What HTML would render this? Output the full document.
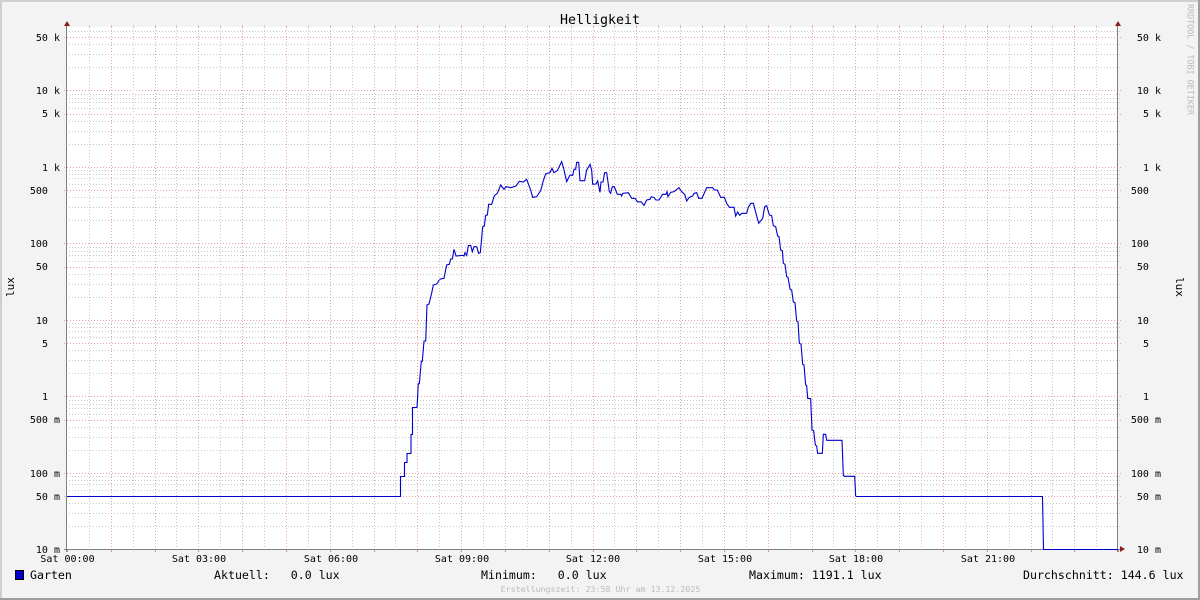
<!DOCTYPE html>
<html><head><meta charset="utf-8"><title>Helligkeit</title>
<style>
html,body{margin:0;padding:0;background:#f3f3f3}
svg{display:block}
text{font-family:"DejaVu Sans Mono","Liberation Mono",monospace;fill:#000;white-space:pre}
.a{font-size:10px}
.l{font-size:11.6px}
.w{font-size:8.4px;fill:#bbb}
.f{font-size:8.3px;fill:#bbb}
.c{fill:none;stroke:#0000cc;stroke-width:1.1;vector-effect:non-scaling-stroke;stroke-linejoin:miter}
</style></head>
<body>
<svg xmlns="http://www.w3.org/2000/svg" width="1200" height="600" viewBox="0 0 1200 600">
<defs>
<clipPath id="p"><rect x="0" y="27" width="1200" height="523"/></clipPath>
<g id="d" shape-rendering="crispEdges">
<path d="M66 -22.5H1121M66 -35.5H1121M66 -45.5H1121M66 -58.5H1121M66 -64.5H1121M66 -68.5H1121M66 -72.5H1121" fill="none" stroke="#c8c8c8" stroke-dasharray="1 2"/>
<path d="M64 .5H1121M64 -52.5H1121" fill="none" stroke="#e6a4a4" stroke-dasharray="1 2"/>
</g>
</defs>
<rect width="1200" height="600" fill="#f3f3f3"/>
<path d="M1200 0V600H0V598H1198V0Z" fill="#9e9e9e"/>
<path d="M0 0H1198V2H2V598H0Z" fill="#cfcfcf"/>
<rect x="67" y="27" width="1051" height="522" fill="#fff"/>

<g clip-path="url(#p)">
<use href="#d" transform="translate(0 549)"/>
<use href="#d" transform="translate(0 473)"/>
<use href="#d" transform="translate(0 396)"/>
<use href="#d" transform="translate(0 320)"/>
<use href="#d" transform="translate(0 243)"/>
<use href="#d" transform="translate(0 167)"/>
<use href="#d" transform="translate(0 90)"/>
</g>
<g shape-rendering="crispEdges" fill="none">
<path stroke="#c8c8c8" stroke-dasharray="1 2" d="M89.5 27V549M133.5 27V549M176.5 27V549M220.5 27V549M264.5 27V549M308.5 27V549M352.5 27V549M395.5 27V549M439.5 27V549M483.5 27V549M527.5 27V549M571.5 27V549M614.5 27V549M658.5 27V549M702.5 27V549M746.5 27V549M790.5 27V549M833.5 27V549M877.5 27V549M921.5 27V549M965.5 27V549M1009.5 27V549M1052.5 27V549M1096.5 27V549"/>
<path stroke="#e6a4a4" stroke-dasharray="1 2" d="M111.5 27V549M155.5 27V549M198.5 27V549M242.5 27V549M286.5 27V549M330.5 27V549M374.5 27V549M417.5 27V549M461.5 27V549M505.5 27V549M549.5 27V549M593.5 27V549M636.5 27V549M680.5 27V549M724.5 27V549M768.5 27V549M812.5 27V549M855.5 27V549M899.5 27V549M943.5 27V549M987.5 27V549M1031.5 27V549M1074.5 27V549"/>
<path stroke="#cfcfcf" d="M89.5 25V27M133.5 25V27M176.5 25V27M220.5 25V27M264.5 25V27M308.5 25V27M352.5 25V27M395.5 25V27M439.5 25V27M483.5 25V27M527.5 25V27M571.5 25V27M614.5 25V27M658.5 25V27M702.5 25V27M746.5 25V27M790.5 25V27M833.5 25V27M877.5 25V27M921.5 25V27M965.5 25V27M1009.5 25V27M1052.5 25V27M1096.5 25V27"/>
<path stroke="#e6b5b5" d="M111.5 25V27M155.5 25V27M198.5 25V27M242.5 25V27M286.5 25V27M330.5 25V27M374.5 25V27M417.5 25V27M461.5 25V27M505.5 25V27M549.5 25V27M593.5 25V27M636.5 25V27M680.5 25V27M724.5 25V27M768.5 25V27M812.5 25V27M855.5 25V27M899.5 25V27M943.5 25V27M987.5 25V27M1031.5 25V27M1074.5 25V27"/>
<path stroke="#d28a8a" d="M67.5 550V552M111.5 550V552M155.5 550V552M198.5 550V552M242.5 550V552M286.5 550V552M330.5 550V552M374.5 550V552M417.5 550V552M461.5 550V552M505.5 550V552M549.5 550V552M593.5 550V552M636.5 550V552M680.5 550V552M724.5 550V552M768.5 550V552M812.5 550V552M855.5 550V552M899.5 550V552M943.5 550V552M987.5 550V552M1031.5 550V552M1074.5 550V552M1118.5 550V552"/>
<path stroke="#808080" d="M66.5 25V552M1117.5 25V552M64 549.5H1121"/>
</g>
<path d="M67 21L70 26H64Z M1118 21L1121 26H1115Z M1120 546L1125 549L1120 552Z" fill="#8a1f1f"/>

<!-- data line -->
<path class="c" d="M67 496.5H400.5V476.5H404.5V462.5H407V453.5H411V434.5H412.5V407.5H417L418.3 383.7H419.3L421.3 361.3H422.3L424 341H425.7L427 305L429 304L431.7 293L433.3 285L436.7 284L439.3 280"/>
<polyline class="c" transform="translate(380 150) scale(.33333)" points="178,388 192,385 200,345 208,343 212,327 217,327 222,298 228,318 248,316 252,318 255,308 260,316 265,287 272,286 277,305 282,290 290,290 296,310 301,308 308,230 313,228 317,196 322,195 326,163 335,163 343,137 352,130 362,105 372,118 378,110 392,113 408,108 418,94 430,96 440,88 452,120 458,142 470,140 482,122 490,92 497,72 510,68 516,55 522,68 532,62 545,35 551,55 560,95 570,75"/>
<polyline class="c" transform="translate(570 150) scale(.33333)" points="0,75 8,76 12,58 17,58 20,37 26,37 30,92 44,92 50,60 55,52 60,43 65,60 68,103 78,102 83,93 90,127 93,96 99,96 104,68 110,68 118,125 122,130 127,110 133,110 142,133 152,133 155,138 158,130 175,128 185,145 195,145 203,156 213,155 222,166 230,150 240,148 244,140 252,143 258,150 267,150 278,133 288,133 291,125 294,140 302,127 312,125 327,113 335,125 344,133 350,153 358,142 368,138 372,130 380,128 386,145 396,145 410,113 428,113 433,120 442,120 452,142 463,142 470,160 478,172 492,172 497,198 503,186 509,196 516,190 530,190 535,172 542,160 550,160 558,190 566,220 578,205 584,170 590,167 598,195"/>
<polyline class="c" transform="translate(740 200) scale(.33333)" points="88,45 95,47 100,77 107,80 113,108 117,110 122,150 127,152 130,190 135,193 140,230 144,232 150,267 155,270 160,306 165,308 170,363 174,365 178,430 183,432 188,493 192,495 197,555 200,557 203,595 212,596 216,690 221,692 226,735 230,738 233,760 247,760 250,703 257,703 260,721 306,721 310,826 314,829 344,829 347,889"/>
<path class="c" d="M855.7 496.5H1042.5L1043.5 549.5H1118"/>

<text x="600" y="24" text-anchor="middle" style="font-size:13.3px">Helligkeit</text>

<g class="a" text-anchor="end">
<text x="60" y="41">50 k</text><text x="60" y="94">10 k</text><text x="60" y="117">5 k</text><text x="60" y="171">1 k</text><text x="60" y="194">500  </text><text x="60" y="247">100  </text><text x="60" y="270">50  </text><text x="60" y="324">10  </text><text x="60" y="347">5  </text><text x="60" y="400">1  </text><text x="60" y="423">500 m</text><text x="60" y="477">100 m</text><text x="60" y="500">50 m</text><text x="60" y="553">10 m</text>
<text x="1161" y="41">50 k</text><text x="1161" y="94">10 k</text><text x="1161" y="117">5 k</text><text x="1161" y="171">1 k</text><text x="1161" y="194">500  </text><text x="1161" y="247">100  </text><text x="1161" y="270">50  </text><text x="1161" y="324">10  </text><text x="1161" y="347">5  </text><text x="1161" y="400">1  </text><text x="1161" y="423">500 m</text><text x="1161" y="477">100 m</text><text x="1161" y="500">50 m</text><text x="1161" y="553">10 m</text>
</g>

<g class="a" text-anchor="middle">
<text x="67.5" y="562">Sat 00:00</text><text x="199" y="562">Sat 03:00</text><text x="331" y="562">Sat 06:00</text><text x="462" y="562">Sat 09:00</text><text x="593" y="562">Sat 12:00</text><text x="725" y="562">Sat 15:00</text><text x="856" y="562">Sat 18:00</text><text x="988" y="562">Sat 21:00</text>
</g>

<text transform="translate(14 287) rotate(-90)" text-anchor="middle" style="font-size:11px">lux</text>
<text transform="translate(1176 287) rotate(90)" text-anchor="middle" style="font-size:11px">lux</text>
<text class="w" transform="translate(1187.5 4) rotate(90)">RRDTOOL / TOBI OETIKER</text>

<rect x="15.5" y="570.5" width="8" height="9" fill="#0000cc" stroke="#000"/>
<g class="l">
<text x="30" y="579">Garten</text>
<text x="214" y="579">Aktuell:   0.0 lux</text>
<text x="481" y="579">Minimum:   0.0 lux</text>
<text x="749" y="579">Maximum: 1191.1 lux</text>
<text x="1023" y="579">Durchschnitt: 144.6 lux</text>
</g>
<text class="f" x="600.5" y="592" text-anchor="middle">Erstellungszeit: 23:58 Uhr am 13.12.2025</text>
</svg>
</body></html>
